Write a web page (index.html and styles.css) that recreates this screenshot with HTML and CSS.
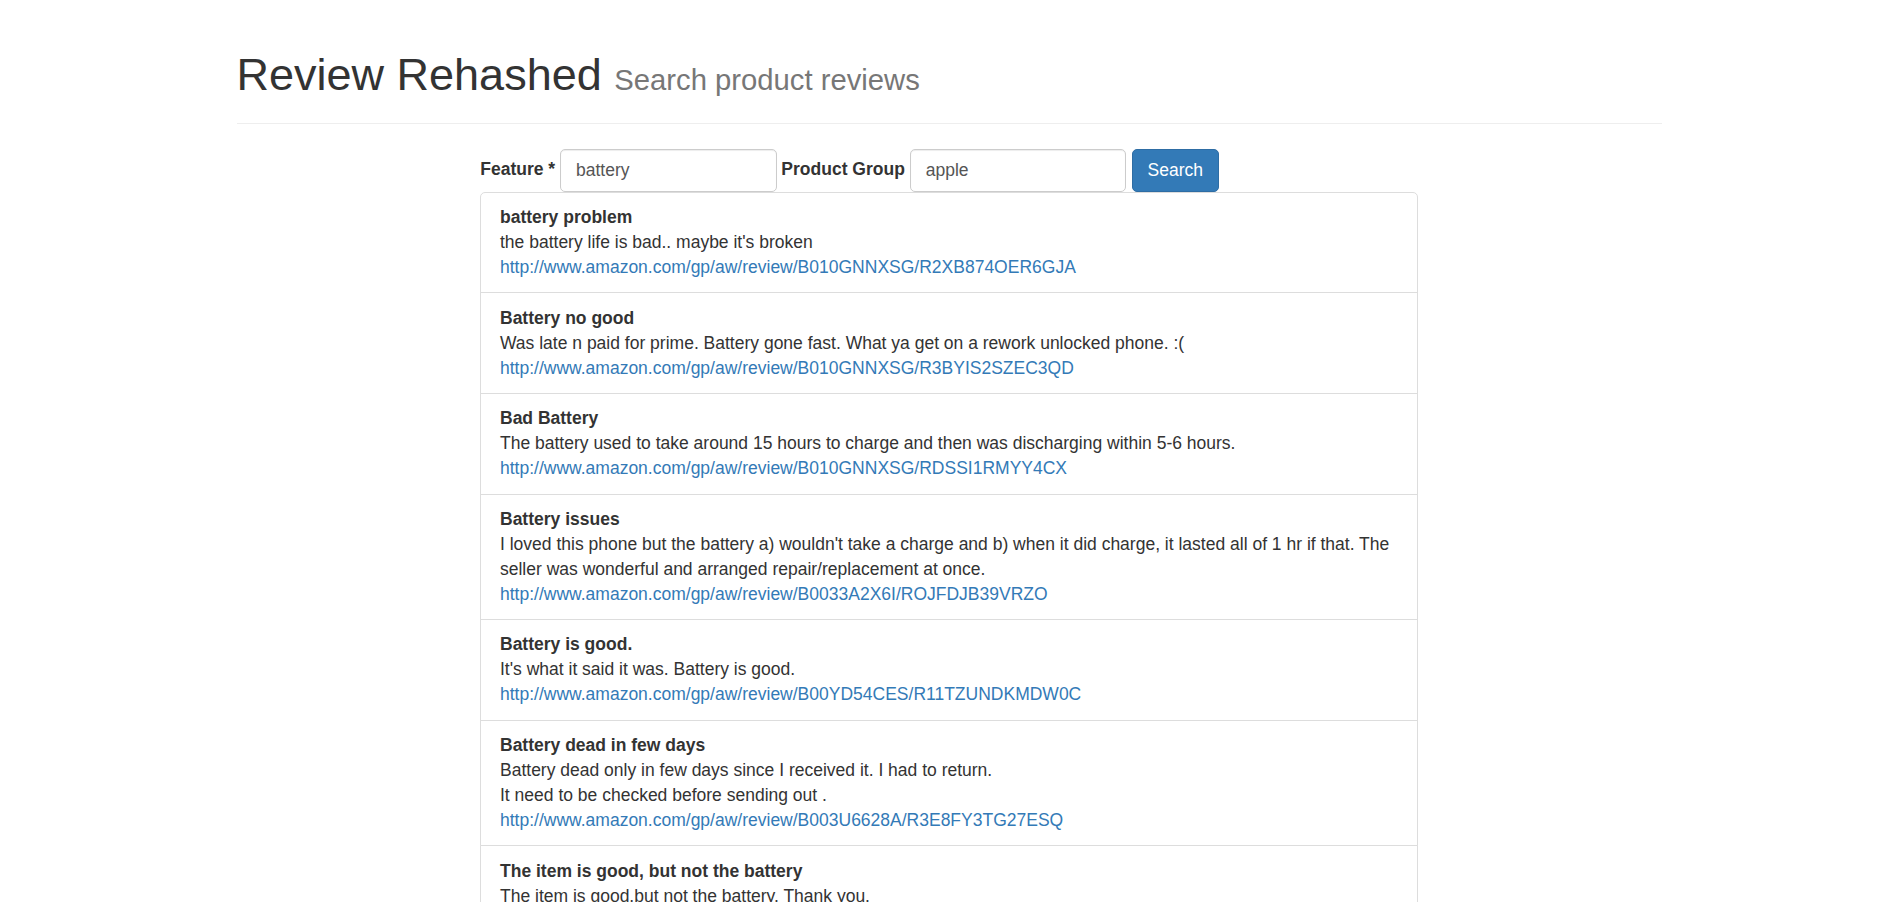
FILE: index.html
```html
<!DOCTYPE html>
<html lang="en">
<head>
<meta charset="utf-8">
<title>Review Rehashed</title>
<link rel="stylesheet" href="styles.css">
</head>
<body>
<div class="container">
  <div class="page-header">
    <h1>Review Rehashed <small>Search product reviews</small></h1>
  </div>
  <div class="content">
    <form class="search-form">
      <label class="field-label">Feature *</label>
      <input class="form-control" type="text" value="battery">
      <label class="field-label">Product Group</label>
      <input class="form-control" type="text" value="apple">
      <button class="btn-primary" type="button">Search</button>
    </form>
    <div class="list-group">
      <div class="list-group-item">
        <div class="review-title">battery problem</div>
        <div class="review-text">the battery life is bad.. maybe it's broken</div>
        <a class="review-link" href="#">http://www.amazon.com/gp/aw/review/B010GNNXSG/R2XB874OER6GJA</a>
      </div>
      <div class="list-group-item">
        <div class="review-title">Battery no good</div>
        <div class="review-text">Was late n paid for prime. Battery gone fast. What ya get on a rework unlocked phone. :(</div>
        <a class="review-link" href="#">http://www.amazon.com/gp/aw/review/B010GNNXSG/R3BYIS2SZEC3QD</a>
      </div>
      <div class="list-group-item">
        <div class="review-title">Bad Battery</div>
        <div class="review-text">The battery used to take around 15 hours to charge and then was discharging within 5-6 hours.</div>
        <a class="review-link" href="#">http://www.amazon.com/gp/aw/review/B010GNNXSG/RDSSI1RMYY4CX</a>
      </div>
      <div class="list-group-item">
        <div class="review-title">Battery issues</div>
        <div class="review-text">I loved this phone but the battery a) wouldn't take a charge and b) when it did charge, it lasted all of 1 hr if that. The seller was wonderful and arranged repair/replacement at once.</div>
        <a class="review-link" href="#">http://www.amazon.com/gp/aw/review/B0033A2X6I/ROJFDJB39VRZO</a>
      </div>
      <div class="list-group-item">
        <div class="review-title">Battery is good.</div>
        <div class="review-text">It's what it said it was. Battery is good.</div>
        <a class="review-link" href="#">http://www.amazon.com/gp/aw/review/B00YD54CES/R11TZUNDKMDW0C</a>
      </div>
      <div class="list-group-item">
        <div class="review-title">Battery dead in few days</div>
        <div class="review-text">Battery dead only in few days since I received it. I had to return.<br>It need to be checked before sending out .</div>
        <a class="review-link" href="#">http://www.amazon.com/gp/aw/review/B003U6628A/R3E8FY3TG27ESQ</a>
      </div>
      <div class="list-group-item">
        <div class="review-title">The item is good, but not the battery</div>
        <div class="review-text">The item is good.but not the battery. Thank you.</div>
      </div>
    </div>
  </div>
</div>
</body>
</html>
```

FILE: styles.css
```css
html, body {
  margin: 0;
  padding: 0;
  background: #fff;
}

body {
  font-family: "Liberation Sans", Arial, Helvetica, sans-serif;
  font-size: 17.5px;
  line-height: 25px;
  color: #333;
}

.container {
  width: 1425px;
  margin: 0 auto;
}

.page-header {
  margin: 50px 0 25px;
  padding-bottom: 11.25px;
  border-bottom: 1px solid #eee;
}

.page-header h1 {
  margin: 0 0 12.5px;
  font-size: 45px;
  line-height: 49.5px;
  font-weight: 500;
  color: #333;
}

.page-header h1 small {
  font-size: 65%;
  font-weight: 400;
  line-height: 1;
  color: #777;
}

.content {
  width: 937.5px;
  margin: 0 auto;
}

.search-form {
  display: flex;
  align-items: center;
  gap: 4.87px;
  height: 42.5px;
}

.field-label {
  font-weight: 700;
  margin-bottom: 3px;
}

.form-control {
  box-sizing: border-box;
  width: 216.5px;
  height: 42.5px;
  padding: 7.5px 15px;
  font-family: inherit;
  font-size: 17.5px;
  line-height: 25px;
  color: #555;
  background: #fff;
  border: 1px solid #ccc;
  border-radius: 5px;
  box-shadow: inset 0 1px 1px rgba(0, 0, 0, 0.075);
  outline: none;
}

.btn-primary {
  box-sizing: border-box;
  height: 42.5px;
  padding: 7.5px 15px;
  margin-left: 0.5px;
  font-family: inherit;
  font-size: 17.5px;
  line-height: 25px;
  color: #fff;
  background: #337ab7;
  border: 1px solid #2e6da4;
  border-radius: 5px;
  cursor: pointer;
}

.list-group {
  margin: 0 0 25px;
}

.list-group-item {
  padding: 12.3px 18.75px;
  border: 1px solid #ddd;
  margin-bottom: -1px;
  background: #fff;
}

.list-group-item:first-child {
  border-top-left-radius: 5px;
  border-top-right-radius: 5px;
}

.list-group-item:last-child {
  margin-bottom: 0;
  border-bottom-left-radius: 5px;
  border-bottom-right-radius: 5px;
}

.review-title {
  font-weight: 700;
}

.review-link {
  color: #337ab7;
  text-decoration: none;
}
```
